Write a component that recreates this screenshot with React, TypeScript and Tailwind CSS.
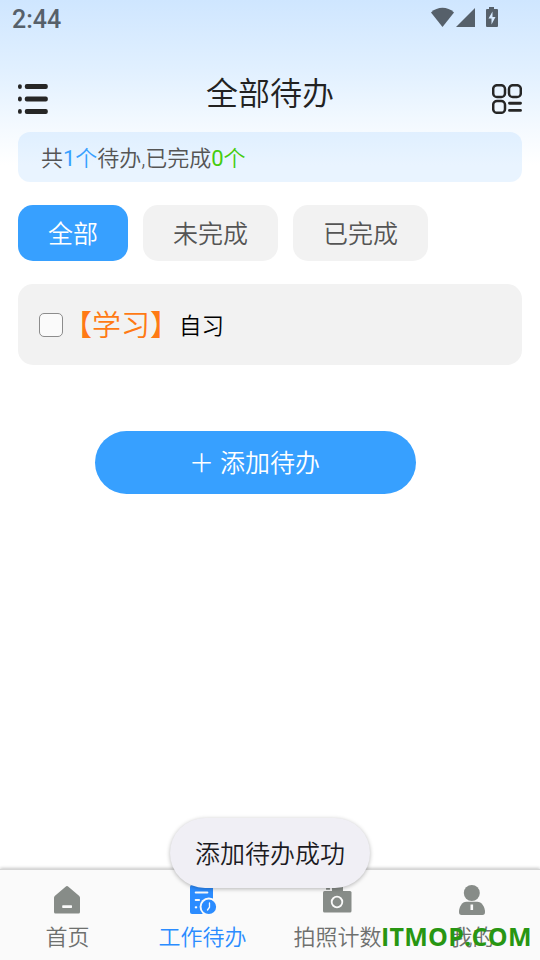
import { useState } from "react";
import type { ReactNode } from "react";

type Tab = { label: string; icon: ReactNode };

const filters = ["全部", "未完成", "已完成"];

function HomeIcon() {
  return (
    <svg className="w-[30px] h-[30px]" viewBox="0 0 30 30">
      <path
        fill="currentColor"
        d="M13.6 1.8a2 2 0 0 1 2.8 0L27 10.8c.7.6 1 1.200 1 2V27a1.500 1.500 0 0 1-1.500 1.500h-23A1.500 1.500 0 0 1 2 27V12.800c0-.8.3-1.400 1-2z"
      />
      <rect x="10.200" y="20.300" width="9.800" height="2.600" rx=".6" fill="#fafafa" />
    </svg>
  );
}

function TodoIcon() {
  return (
    <svg className="w-[30px] h-[30px]" viewBox="0 0 30 30">
      <rect x="3" y="0" width="23" height="29" rx="2" fill="currentColor" />
      <path d="M8.800 7.500h11.500M8.800 15h3.200M8.800 22.300h.4" stroke="#fafafa" strokeWidth="2.200" strokeLinecap="round" />
      <circle cx="21.800" cy="21.800" r="9.200" fill="#fafafa" />
      <circle cx="21.800" cy="21.800" r="7.300" fill="currentColor" />
      <path d="M22.500 18v4.200l-2 2.800" fill="none" stroke="#fafafa" strokeWidth="1.300" strokeLinecap="round" />
    </svg>
  );
}

function CameraIcon() {
  return (
    <svg className="w-[30px] h-[30px]" viewBox="0 0 30 30">
      <rect x="10" y="1" width="11" height="7" rx="1" fill="currentColor" />
      <rect x="4" y="3" width="4" height="1.800" rx=".5" fill="currentColor" />
      <rect x="1" y="6" width="28.500" height="21.500" rx="1.500" fill="currentColor" />
      <circle cx="15" cy="17" r="5.300" fill="none" stroke="#fafafa" strokeWidth="1.800" />
    </svg>
  );
}

function UserIcon() {
  return (
    <svg className="w-[30px] h-[30px]" viewBox="0 0 30 30">
      <circle cx="14.800" cy="8" r="8" fill="currentColor" />
      <path
        fill="currentColor"
        d="M9.500 16.800h10.600c4.600 0 7.900 5 7.900 10.200 0 1.800-.8 3-2.600 3H4.600C2.800 30 2 28.800 2 27c0-5.200 3-10.200 7.500-10.200z"
      />
      <path d="M13.500 19.500h2.600v5.500h-2.600z" fill="#fafafa" />
    </svg>
  );
}

const tabs: Tab[] = [
  { label: "首页", icon: <HomeIcon /> },
  { label: "工作待办", icon: <TodoIcon /> },
  { label: "拍照计数", icon: <CameraIcon /> },
  { label: "我的", icon: <UserIcon /> },
];

function StatusBar() {
  return (
    <div className="flex h-10 items-start justify-between pl-3 pr-[41px] text-[#56606a]">
      <span className="pt-[5px] text-[25px] leading-[30px] font-medium">2:44</span>
      <svg className="mt-[6px] w-[68px] h-[22px]" viewBox="0 0 68 22" fill="currentColor">
        <path d="M11.500 21 0 6.500C6.500.3 16.500.3 23 6.500z" />
        <path d="M44 2v19H25z" />
        <path d="M58 1h5v2h3a1 1 0 0 1 1 1v16a1 1 0 0 1-1 1H56a1 1 0 0 1-1-1V4a1 1 0 0 1 1-1h2z" />
        <path d="M61.500 5.500v5.500h3l-4 7.500v-6h-3z" fill="#d6eaff" />
      </svg>
    </div>
  );
}

export default function App() {
  const [filter, setFilter] = useState("全部");
  const [tab, setTab] = useState("工作待办");
  const [done, setDone] = useState(false);

  return (
    <div className="relative flex h-[960px] w-[540px] flex-col overflow-hidden bg-white bg-[linear-gradient(to_bottom,#cfe6ff_0px,#e1f0ff_70px,#f5faff_130px,#ffffff_165px)] font-[Roboto,'Noto_Sans_CJK_SC',sans-serif] font-[350]">
      <StatusBar />

      {/* Header */}
      <header className="flex h-[92px] items-start justify-between px-[18px]">
        <svg className="mt-11 h-[30px] w-[30px]" viewBox="0 0 30 30" fill="#262626">
          <rect x="0" y="0.200" width="3.800" height="4.800" rx="1.900" />
          <rect x="0" y="12.600" width="3.800" height="4.800" rx="1.900" />
          <rect x="0" y="25" width="3.800" height="4.800" rx="1.900" />
          <rect x="6.800" y="0" width="23" height="5" rx="2" />
          <rect x="6.800" y="12.500" width="23" height="5" rx="2" />
          <rect x="6.800" y="25" width="23" height="5" rx="2" />
        </svg>
        <h1 className="pt-[34px] text-[32px] leading-10 font-[350] text-[#222]">全部待办</h1>
        <svg className="mt-11 h-[30px] w-[30px]" viewBox="0 0 30 30" fill="none" stroke="#262626" strokeWidth="2.500">
          <rect x="1.200" y="1.200" width="11.800" height="11.800" rx="3.800" />
          <rect x="17" y="1.200" width="11.800" height="11.800" rx="3.800" />
          <rect x="1.200" y="17" width="11.800" height="11.800" rx="3.800" />
          <path d="M17.500 19.300h11M17.500 26.400h11" strokeWidth="2.900" strokeLinecap="round" />
        </svg>
      </header>

      <main className="flex flex-1 flex-col px-[18px]">
        {/* Summary */}
        <div className="h-[50px] rounded-xl bg-[#3a9cff]/11 pl-[23px] text-[22px] leading-[54px] tracking-[-0.05px] text-[#555]">
          共
          <span className="text-[#37a0ff]">
            <span className="font-normal">1</span>个
          </span>
          待办,已完成
          <span className="text-[#45cc0d]">
            <span className="font-normal">0</span>个
          </span>
        </div>

        {/* Filters */}
        <div className="mt-[23px] flex gap-[15px]">
          {filters.map((f) => (
            <button
              key={f}
              onClick={() => setFilter(f)}
              className={`h-14 rounded-[15px] px-[30px] pt-[2px] text-[25px] leading-[56px] ${
                filter === f ? "bg-[#37a0ff] text-white" : "bg-[#f2f2f2] text-[#555]"
              }`}
            >
              {f}
            </button>
          ))}
        </div>

        {/* Todo item */}
        <label className="mt-[23px] flex h-[81px] items-center rounded-[15px] bg-[#f2f2f2] pl-[21px]">
          <input
            type="checkbox"
            checked={done}
            onChange={() => setDone(!done)}
            className="h-6 w-6 appearance-none rounded-[5px] border border-[#8c8c8c] bg-[#fafafa] checked:bg-[#37a0ff]"
          />
          <span className="mt-[2px] text-[29px] leading-10 text-[#ff7a14]">【学习】</span>
          <span className="mt-[3px] text-[22.500px] leading-10 text-black">自习</span>
        </label>

        <button className="mt-[66px] ml-[77px] h-[63px] w-[321px] rounded-full bg-[#37a0ff] pt-px pr-[2px] text-[25px] leading-[63px] text-white">
          ＋ 添加待办
        </button>
      </main>

      {/* Bottom tabs */}
      <nav className="grid h-[91px] grid-cols-4 border-t border-[#d6d6d6] bg-[#fafafa] shadow-[0_-1px_3px_rgba(0,0,0,0.22)]">
        {tabs.map((t) => (
          <button
            key={t.label}
            onClick={() => setTab(t.label)}
            className={`flex flex-col items-center pt-[15px] ${tab === t.label ? "text-[#2b8cff]" : "text-[#878c88]"}`}
          >
            <span className="pr-[2px]">{t.icon}</span>
            <span className={`mt-[7px] text-[22px] leading-8 whitespace-nowrap ${tab === t.label ? "" : "text-[#6e706e]"}`}>
              {t.label}
            </span>
          </button>
        ))}
      </nav>

      {/* Toast */}
      <div className="absolute top-[818px] left-[170px] h-[70px] w-[200px] rounded-full bg-[#f0eff5] text-center text-[25px] leading-[73px] text-[#1c1b1f] shadow-[0_1px_4px_rgba(0,0,0,0.28)]">
        添加待办成功
      </div>

      {/* Watermark */}
      <div className="absolute top-[919px] left-[381px] font-['Open_Sans',sans-serif] text-[25px] leading-[34px] font-bold tracking-[0.25px] whitespace-nowrap text-[#289612]">
        ITMOP.COM
      </div>
    </div>
  );
}
